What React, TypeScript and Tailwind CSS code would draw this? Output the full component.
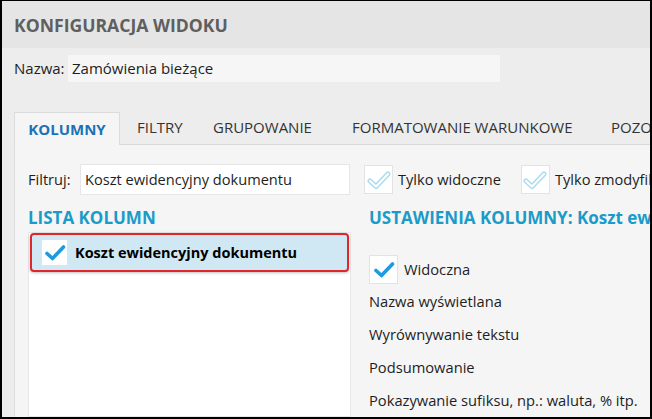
import React from 'react';

const FONT = { fontFamily: '"Open Sans", "Noto Sans", sans-serif' };

function CheckBox({ size = 29, light = false }: { size?: number; light?: boolean }) {
    return (
        <div
            className="flex items-center justify-center bg-white border border-[#e3e3e3] shrink-0"
            style={{ width: size, height: size }}
        >
            {light ? (
                <svg width="24" height="20" viewBox="0 0 24 20">
                    <path d="M3 11 L9 16.5 L21 4" fill="none" stroke="#a7dbee" strokeWidth="5" strokeLinecap="round" strokeLinejoin="round" />
                    <path d="M3 11 L9 16.5 L21 4" fill="none" stroke="#ffffff" strokeWidth="2.2" strokeLinecap="round" strokeLinejoin="round" />
                </svg>
            ) : (
                <svg width="22" height="18" viewBox="0 0 22 18">
                    <path d="M3 9.5 L8.5 14.5 L19.5 3" fill="none" stroke="#1e9ade" strokeWidth="3.6" strokeLinecap="round" strokeLinejoin="round" />
                </svg>
            )}
        </div>
    );
}

const tabs = [
    { label: 'FILTRY', w: 'w-[76px]' },
    { label: 'GRUPOWANIE', w: 'w-[139px]' },
    { label: 'FORMATOWANIE WARUNKOWE', w: 'w-[259px]' },
    { label: 'POZOSTAŁE', w: 'w-[100px]' },
];

const settings = [
    'Nazwa wyświetlana',
    'Wyrównywanie tekstu',
    'Podsumowanie',
    'Pokazywanie sufiksu, np.: waluta, % itp.',
];

export default function App() {
    return (
        <div
            className="w-[652px] h-[419px] overflow-hidden bg-[#ededed] border-t border-x-2 border-b-2 border-black flex flex-col text-[#1e1e1e]"
            style={FONT}
        >
            {/* header */}
            <div className="h-[47px] shrink-0 bg-[#e5e5e5] flex items-center pl-[12px] pt-[2px]">
                <h1 className="text-[17.6px] font-bold text-[#5f5f5f] whitespace-nowrap">KONFIGURACJA WIDOKU</h1>
            </div>

            {/* nazwa */}
            <div className="flex items-center h-[27px] mt-[7px] pl-[12px] text-[15px] shrink-0 whitespace-nowrap">
                <span className="w-[54px] shrink-0">Nazwa:</span>
                <div className="w-[432px] shrink-0 h-full bg-[#f6f6f6] flex items-center pl-[4px]">Zamówienia bieżące</div>
            </div>

            {/* tabs */}
            <div className="flex items-end h-[34px] mt-[29px] ml-[12px] border-b border-[#d9d9d9] shrink-0 text-[15px] whitespace-nowrap">
                <div className="h-full w-[106px] shrink-0 -mb-px bg-[#f5f5f5] border border-b-0 border-[#dcdcdc] flex items-center justify-center font-bold text-[#1b72b6]">
                    KOLUMNY
                </div>
                <div className="flex items-center h-full pl-[17px] text-[#333]">
                    {tabs.map((t) => (
                        <span key={t.label} className={`${t.w} shrink-0`}>{t.label}</span>
                    ))}
                </div>
            </div>

            {/* panel */}
            <div className="flex-1 ml-[12px] bg-[#f5f5f5] border-l border-[#dedede] pl-[13px] pt-[19px] flex flex-col min-h-0">
                <div className="flex items-center h-[31px] text-[14.6px] whitespace-nowrap shrink-0">
                    <span className="w-[52px] shrink-0">Filtruj:</span>
                    <div className="w-[270px] shrink-0 h-full bg-white border border-[#e6e6e6] flex items-center pl-[4px]">
                        Koszt ewidencyjny dokumentu
                    </div>
                    <div className="flex items-center ml-[14px] gap-[5px] shrink-0">
                        <CheckBox light />
                        <span>Tylko widoczne</span>
                    </div>
                    <div className="flex items-center ml-[20px] gap-[5px] shrink-0">
                        <CheckBox light />
                        <span>Tylko zmodyfikowane</span>
                    </div>
                </div>

                <div className="flex flex-1 mt-[13px] min-h-0 gap-[18px]">
                    {/* left: lista kolumn */}
                    <div className="w-[323px] shrink-0 flex flex-col">
                        <h2 className="text-[17px] font-bold text-[#1a9bc8] leading-[20px] h-[24px]">LISTA KOLUMN</h2>
                        <div className="flex-1 bg-white border border-[#e8e8e8] px-[1px]">
                            <div className="h-[39px] bg-[#cfe8f4] border-2 border-[#e0262b] rounded-[4px] shadow-[0_1px_3px_rgba(0,0,0,0.25)] flex items-center pl-[9px] gap-[7px]">
                                <CheckBox size={27} />
                                <span className="text-[14.5px] font-bold text-black whitespace-nowrap">Koszt ewidencyjny dokumentu</span>
                            </div>
                        </div>
                    </div>

                    {/* right: ustawienia */}
                    <div className="flex-1 min-w-0 flex flex-col text-[14.7px] whitespace-nowrap">
                        <h2 className="text-[17px] font-bold text-[#1a9bc8] leading-[20px] h-[24px]">
                            USTAWIENIA KOLUMNY: Koszt ewidencyjny dokumentu
                        </h2>
                        <div className="flex items-center gap-[6px] mt-[27px]">
                            <CheckBox />
                            <span>Widoczna</span>
                        </div>
                        <div className="flex flex-col pt-px">
                            {settings.map((s) => (
                                <div key={s} className="h-[33px] flex items-center">
                                    {s}
                                </div>
                            ))}
                        </div>
                    </div>
                </div>
            </div>
        </div>
    );
}
